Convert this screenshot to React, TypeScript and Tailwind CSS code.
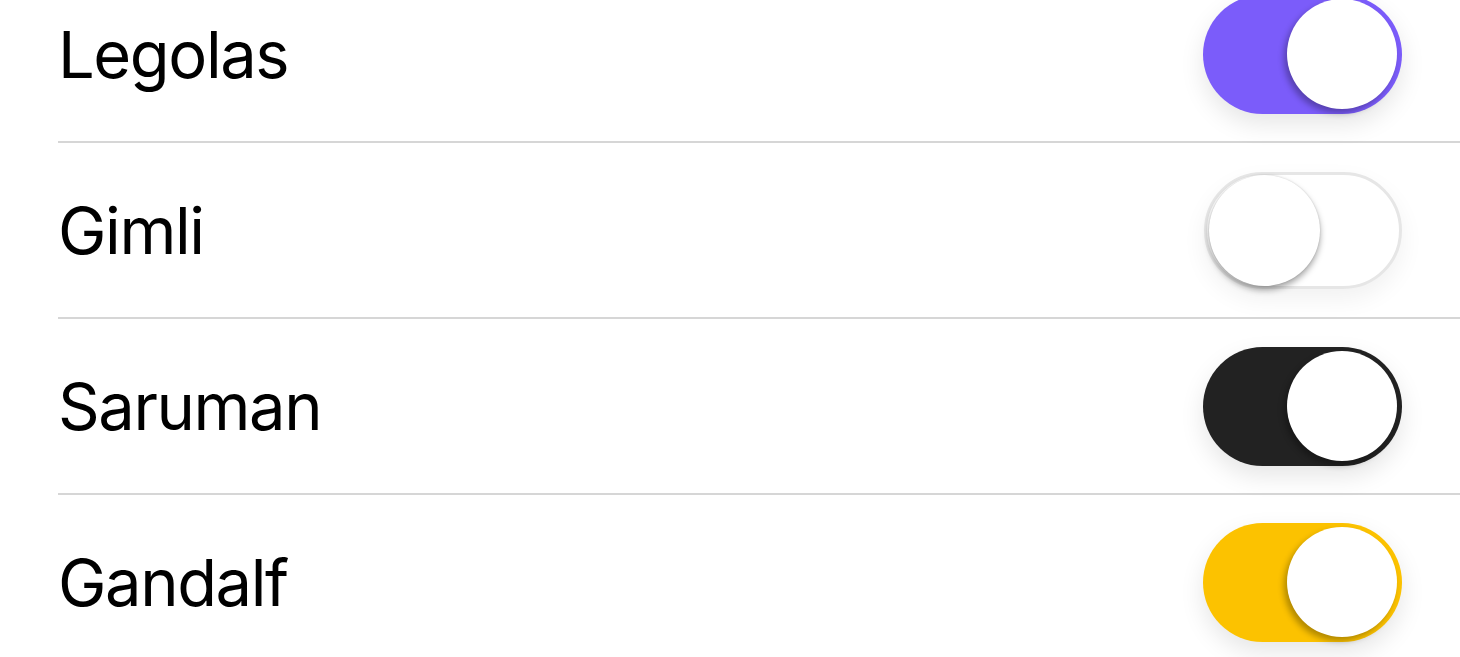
const people = [
  { name: "Legolas", on: true, track: "bg-[#7b5cfa]" },
  { name: "Gimli", on: false, track: "bg-white" },
  { name: "Saruman", on: true, track: "bg-[#222222]" },
  { name: "Gandalf", on: true, track: "bg-[#fcc200]" },
];

function Toggle({ on, track }: { on: boolean; track: string }) {
  if (!on) {
    return (
      <div className="flex items-center w-[198px] h-[117px] rounded-full border-[3px] border-[#e6e6e6] bg-white shadow-[0_10px_24px_rgba(0,0,0,0.06)] px-[2px]">
        <div className="w-[111px] h-[111px] rounded-full bg-white shadow-[0_4px_6px_rgba(0,0,0,0.35),0_0_2px_rgba(0,0,0,0.15)]" />
      </div>
    );
  }
  return (
    <div
      className={`flex items-center justify-end w-[199px] h-[119px] rounded-full ${track} shadow-[0_10px_24px_rgba(0,0,0,0.1)] pr-[5px]`}
    >
      <div className="w-[110px] h-[110px] rounded-full bg-white shadow-[-3px_4px_6px_rgba(0,0,0,0.3)]" />
    </div>
  );
}

export default function App() {
  return (
    <div className="w-[1460px] h-[657px] overflow-hidden bg-white font-['Inter',sans-serif]">
      <ul className="-mt-[33px]">
        {people.map((p) => (
          <li
            key={p.name}
            className="ml-[58px] pr-[58px] h-[176px] flex items-center justify-between border-b-[2px] border-[#d6d6d6]"
          >
            <span className="text-[65px] leading-none text-black tracking-[-1.4px]">
              {p.name}
            </span>
            <Toggle on={p.on} track={p.track} />
          </li>
        ))}
      </ul>
    </div>
  );
}
